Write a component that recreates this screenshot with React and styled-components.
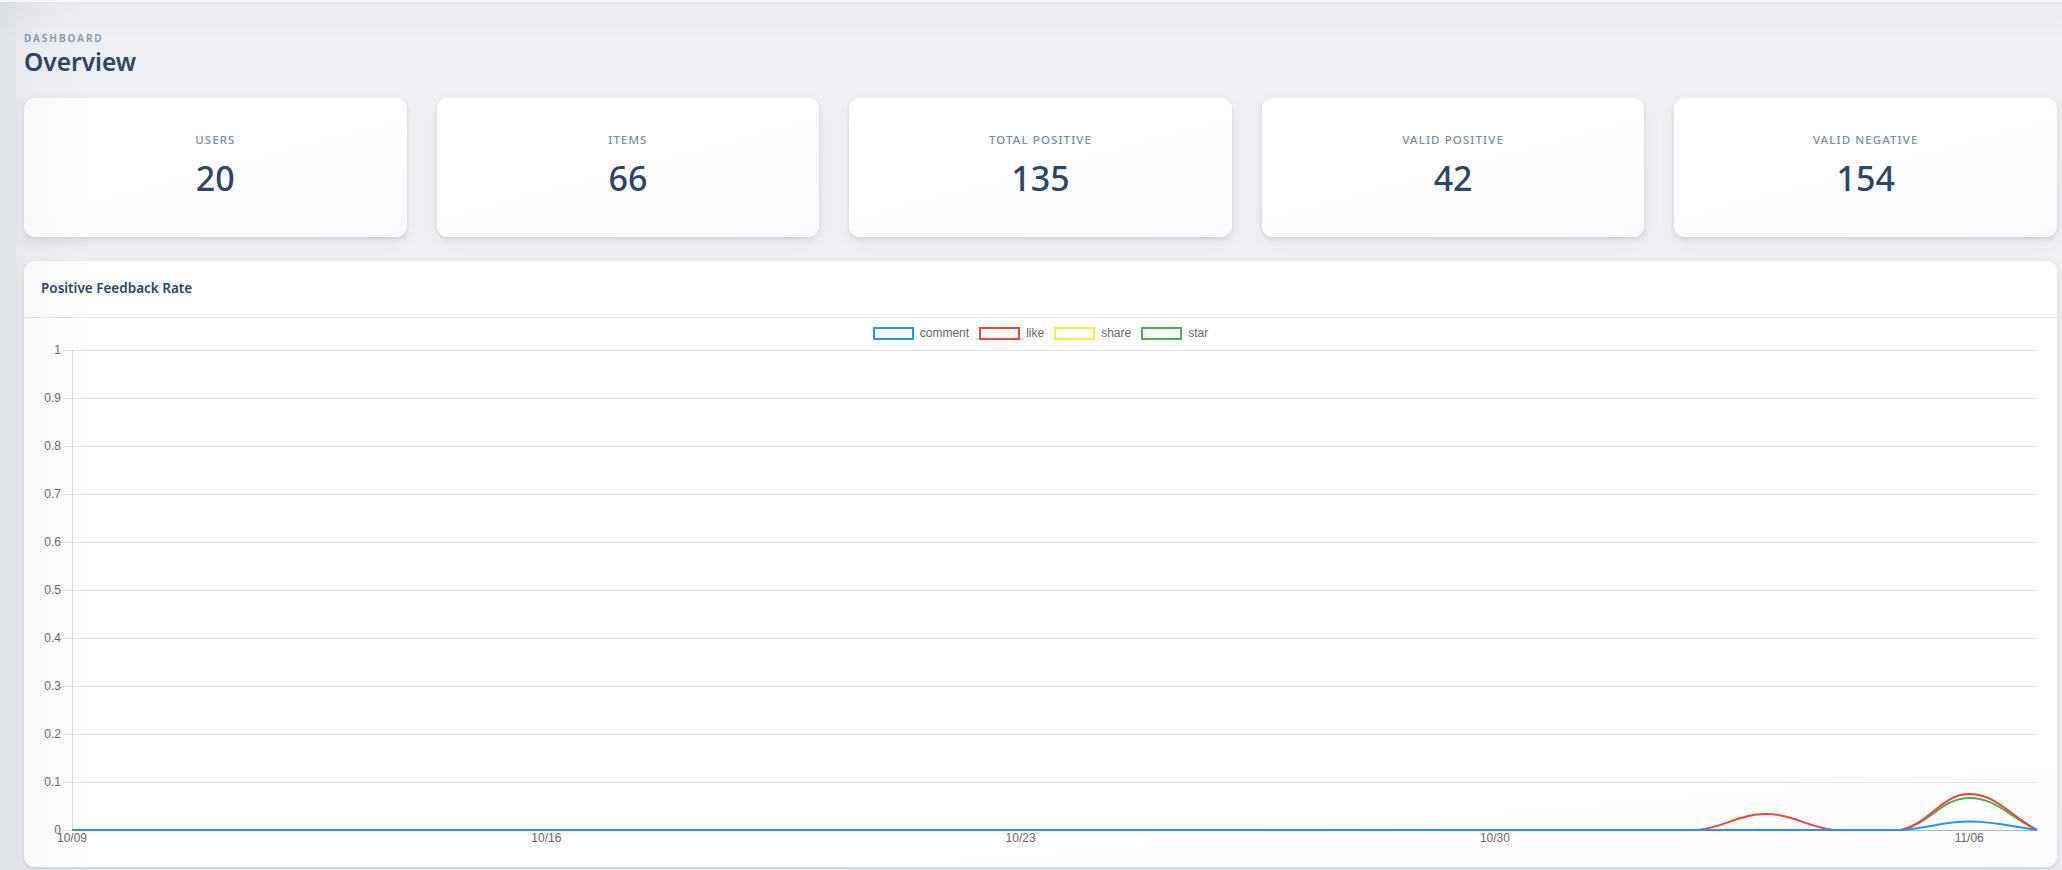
import React from "react";
import styled, { createGlobalStyle } from "styled-components";

const GlobalStyle = createGlobalStyle`
  html, body {
    margin: 0;
    padding: 0;
    background: #eef0f3;
    overflow: hidden;
  }
  * {
    box-sizing: border-box;
  }
`;

// palette
const ink = "#2d4569";
const muted = "#7c8ba2";

const Page = styled.main`
  position: relative;
  min-height: 870px;
  padding: 31px 5px 0 24px;
  font-family: "Noto Sans", "Open Sans", sans-serif;
  background: #eef0f3;

  /* shadow cast by the sidebar / header */
  &::before {
    content: "";
    position: absolute;
    inset: 0;
    pointer-events: none;
    z-index: 1;
    box-shadow: inset 0 2px 0 #f6f7f9;
    background:
      linear-gradient(to right, rgba(30, 40, 60, 0.07) 0, rgba(30, 40, 60, 0.03) 22px, rgba(30, 40, 60, 0) 90px),
      linear-gradient(to bottom, rgba(30, 40, 60, 0.03) 0, rgba(30, 40, 60, 0) 40px);
  }
`;

const Eyebrow = styled.div`
  font-size: 10px;
  line-height: 14px;
  font-weight: 600;
  letter-spacing: 2px;
  text-transform: uppercase;
  color: #8594ab;
`;

const Title = styled.h1`
  margin: 1px 0 21px;
  font-size: 24.5px;
  line-height: 31px;
  font-weight: 600;
  color: ${ink};
`;

const StatGrid = styled.section`
  display: grid;
  grid-template-columns: repeat(5, 1fr);
  gap: 30px;
  margin-bottom: 24px;
`;

const Card = styled.div`
  background: linear-gradient(165deg, #ffffff 45%, #f9fafb 100%);
  border-radius: 11px;
  box-shadow: 0 2px 4px rgba(20, 30, 50, 0.1), 0 6px 18px rgba(20, 30, 50, 0.06);
`;

const StatCard = styled(Card)`
  height: 139px;
  display: flex;
  flex-direction: column;
  align-items: center;
  justify-content: center;
  gap: 8px;
  padding-bottom: 3px;
`;

const StatLabel = styled.div`
  font-size: 11.5px;
  line-height: 16px;
  font-weight: 500;
  letter-spacing: 1.1px;
  text-transform: uppercase;
  color: ${muted};
`;

const StatValue = styled.div`
  font-size: 34px;
  line-height: 44px;
  font-weight: 500;
  color: ${ink};
`;

const ChartCard = styled(Card)`
  overflow: hidden;
  background: linear-gradient(175deg, #ffffff 85%, #fafbfc 100%);
`;

const ChartHeader = styled.header`
  height: 57px;
  display: flex;
  align-items: center;
  padding: 0 17px 2px;
  border-bottom: 1px solid #e6e8eb;
`;

const ChartTitle = styled.h2`
  margin: 0;
  font-size: 13.5px;
  font-weight: 600;
  color: ${ink};
`;

const Legend = styled.div`
  height: 22px;
  margin-top: 4px;
  display: flex;
  align-items: center;
  justify-content: center;
  gap: 10px;
  font-family: "Liberation Sans", Arial, sans-serif;
  font-size: 12px;
  color: #666;
`;

const LegendItem = styled.div`
  display: flex;
  align-items: center;
  gap: 6px;
`;

const LegendBox = styled.span`
  width: 41px;
  height: 13px;
  border: 2px solid ${(p) => p.$color};
  background: #fff;
`;

const Plot = styled.svg`
  display: block;
  width: 100%;
  height: 523px;
  font-family: "Liberation Sans", Arial, sans-serif;
  font-size: 12px;
`;

const stats = [
  { label: "Users", value: 20 },
  { label: "Items", value: 66 },
  { label: "Total Positive", value: 135 },
  { label: "Valid Positive", value: 42 },
  { label: "Valid Negative", value: 154 },
];

const DAYS = 30;
const zeros = () => Array(DAYS).fill(0);
const withPoints = (pts) => {
  const arr = zeros();
  Object.entries(pts).forEach(([i, v]) => (arr[i] = v));
  return arr;
};

// share has no recorded points, so only its legend entry shows
const series = [
  { name: "comment", color: "#2196f3", data: withPoints({ 28: 0.0175 }) },
  { name: "like", color: "#f44336", data: withPoints({ 25: 0.0333, 28: 0.075 }) },
  { name: "share", color: "#ffeb3b", data: null },
  { name: "star", color: "#4caf50", data: withPoints({ 28: 0.0667 }) },
];

// plot geometry (svg coordinates)
const LEFT = 48;
const RIGHT = 2013;
const TOP = 6;
const ZERO = 486;
const STEP = (RIGHT - LEFT) / (DAYS - 1);
const yOf = (v) => ZERO - v * (ZERO - TOP);

const dayLabel = (i) => {
  const d = new Date(2024, 9, 9 + i);
  return `${String(d.getMonth() + 1).padStart(2, "0")}/${String(d.getDate()).padStart(2, "0")}`;
};

// chart.js style spline, control points capped to the plot area
const splinePath = (values, tension = 0.4) => {
  const pts = values.map((v, i) => [LEFT + i * STEP, yOf(v)]);
  const cap = (y) => Math.min(Math.max(y, TOP), ZERO);
  const cps = pts.map((p, i) => {
    const prev = pts[i - 1] || p;
    const next = pts[i + 1] || p;
    const d01 = Math.hypot(p[0] - prev[0], p[1] - prev[1]);
    const d12 = Math.hypot(next[0] - p[0], next[1] - p[1]);
    const sum = d01 + d12 || 1;
    const fa = (tension * d01) / sum;
    const fb = (tension * d12) / sum;
    return {
      in: [p[0] - fa * (next[0] - prev[0]), cap(p[1] - fa * (next[1] - prev[1]))],
      out: [p[0] + fb * (next[0] - prev[0]), cap(p[1] + fb * (next[1] - prev[1]))],
    };
  });
  let d = `M${pts[0][0]},${pts[0][1]}`;
  for (let i = 1; i < pts.length; i++) {
    d += ` C${cps[i - 1].out.join(",")} ${cps[i].in.join(",")} ${pts[i].join(",")}`;
  }
  return d;
};

const FeedbackChart = () => {
  const ticks = Array.from({ length: 11 }, (_, i) => i / 10);
  const xTicks = [0, 7, 14, 21, 28];
  return (
    <Plot viewBox="0 0 2033 523" preserveAspectRatio="none">
      {ticks.map((t) => (
        <g key={t}>
          <line x1={39} x2={RIGHT} y1={yOf(t) + 0.5} y2={yOf(t) + 0.5} stroke="#e3e3e3" />
          <text x={37} y={yOf(t) + 4} textAnchor="end" fill="#666">
            {t === 0 || t === 1 ? t : t.toFixed(1)}
          </text>
        </g>
      ))}
      <line x1={LEFT + 0.5} x2={LEFT + 0.5} y1={TOP} y2={ZERO + 1} stroke="#dcdcdc" />
      <line x1={LEFT} x2={RIGHT} y1={ZERO + 0.5} y2={ZERO + 0.5} stroke="#b8b8b8" />
      {xTicks.map((i) => (
        <text key={i} x={LEFT + i * STEP} y={ZERO + 12} textAnchor="middle" fill="#666">
          {dayLabel(i)}
        </text>
      ))}
      {[...series].reverse().filter((s) => s.data).map((s) => (
        <path key={s.name} d={splinePath(s.data)} fill="none" stroke={s.color} strokeWidth={2} />
      ))}
    </Plot>
  );
};

const App = () => {
  return (
    <>
      <GlobalStyle />
      <Page>
        <Eyebrow>Dashboard</Eyebrow>
        <Title>Overview</Title>
        <StatGrid>
          {stats.map((s) => (
            <StatCard key={s.label}>
              <StatLabel>{s.label}</StatLabel>
              <StatValue>{s.value}</StatValue>
            </StatCard>
          ))}
        </StatGrid>
        <ChartCard>
          <ChartHeader>
            <ChartTitle>Positive Feedback Rate</ChartTitle>
          </ChartHeader>
          <Legend>
            {series.map((s) => (
              <LegendItem key={s.name}>
                <LegendBox $color={s.color} />
                {s.name}
              </LegendItem>
            ))}
          </Legend>
          <FeedbackChart />
        </ChartCard>
      </Page>
    </>
  );
};

export default App;
